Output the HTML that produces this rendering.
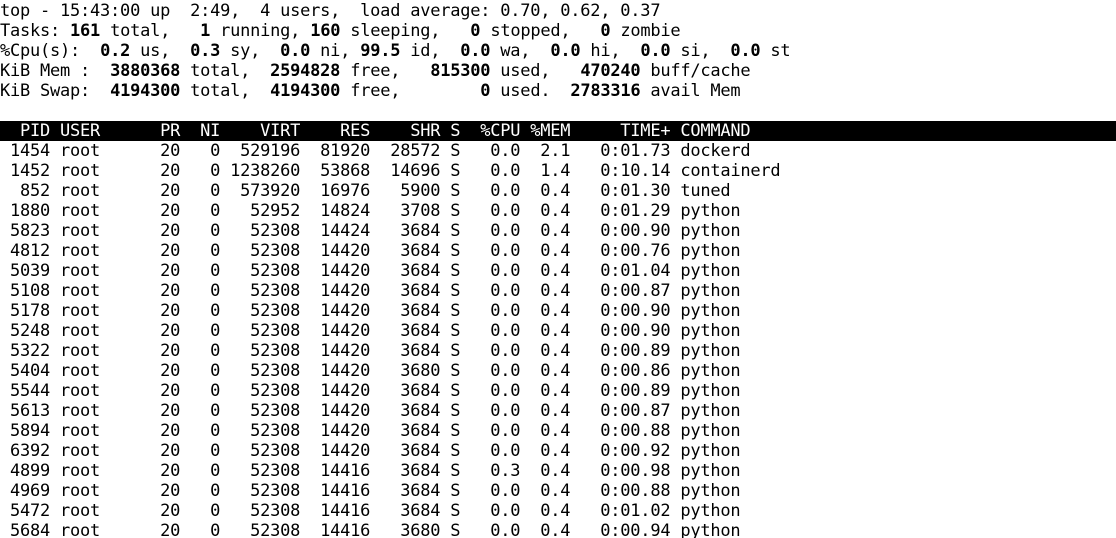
<!DOCTYPE html>
<html><head><meta charset="utf-8"><style>
html,body{margin:0;padding:0;background:#fff;width:1116px;height:538px;overflow:hidden}
pre{margin:0;padding-top:1px;font-family:"DejaVu Sans Mono","Liberation Mono",monospace;font-size:17px;line-height:20px;letter-spacing:-0.23px;color:#000;white-space:pre}
b{font-weight:bold}
.h{display:block;background:#000;color:#fff;width:1116px}
</style></head><body><pre>top - 15:43:00 up  2:49,  4 users,  load average: 0.70, 0.62, 0.37
Tasks: <b>161</b> total,   <b>1</b> running, <b>160</b> sleeping,   <b>0</b> stopped,   <b>0</b> zombie
%Cpu(s):  <b>0.2</b> us,  <b>0.3</b> sy,  <b>0.0</b> ni, <b>99.5</b> id,  <b>0.0</b> wa,  <b>0.0</b> hi,  <b>0.0</b> si,  <b>0.0</b> st
KiB Mem :  <b>3880368</b> total,  <b>2594828</b> free,   <b>815300</b> used,   <b>470240</b> buff/cache
KiB Swap:  <b>4194300</b> total,  <b>4194300</b> free,        <b>0</b> used.  <b>2783316</b> avail Mem

<span class="h">  PID USER      PR  NI    VIRT    RES    SHR S  %CPU %MEM     TIME+ COMMAND</span> 1454 root      20   0  529196  81920  28572 S   0.0  2.1   0:01.73 dockerd
 1452 root      20   0 1238260  53868  14696 S   0.0  1.4   0:10.14 containerd
  852 root      20   0  573920  16976   5900 S   0.0  0.4   0:01.30 tuned
 1880 root      20   0   52952  14824   3708 S   0.0  0.4   0:01.29 python
 5823 root      20   0   52308  14424   3684 S   0.0  0.4   0:00.90 python
 4812 root      20   0   52308  14420   3684 S   0.0  0.4   0:00.76 python
 5039 root      20   0   52308  14420   3684 S   0.0  0.4   0:01.04 python
 5108 root      20   0   52308  14420   3684 S   0.0  0.4   0:00.87 python
 5178 root      20   0   52308  14420   3684 S   0.0  0.4   0:00.90 python
 5248 root      20   0   52308  14420   3684 S   0.0  0.4   0:00.90 python
 5322 root      20   0   52308  14420   3684 S   0.0  0.4   0:00.89 python
 5404 root      20   0   52308  14420   3680 S   0.0  0.4   0:00.86 python
 5544 root      20   0   52308  14420   3684 S   0.0  0.4   0:00.89 python
 5613 root      20   0   52308  14420   3684 S   0.0  0.4   0:00.87 python
 5894 root      20   0   52308  14420   3684 S   0.0  0.4   0:00.88 python
 6392 root      20   0   52308  14420   3684 S   0.0  0.4   0:00.92 python
 4899 root      20   0   52308  14416   3684 S   0.3  0.4   0:00.98 python
 4969 root      20   0   52308  14416   3684 S   0.0  0.4   0:00.88 python
 5472 root      20   0   52308  14416   3684 S   0.0  0.4   0:01.02 python
 5684 root      20   0   52308  14416   3680 S   0.0  0.4   0:00.94 python
</pre></body></html>
